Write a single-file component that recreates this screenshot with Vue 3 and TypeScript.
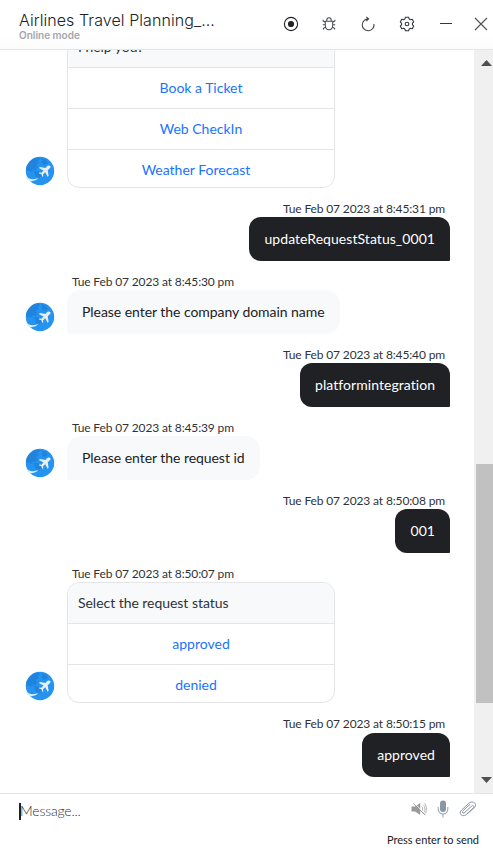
<script setup lang="ts">
interface Message {
  id: number
  from: 'bot' | 'user'
  time?: string
  text: string
  options?: string[]
}

const messages: Message[] = [
  { id: 1, from: 'bot', text: 'I help you?', options: ['Book a Ticket', 'Web CheckIn', 'Weather Forecast'] },
  { id: 2, from: 'user', time: 'Tue Feb 07 2023 at 8:45:31 pm', text: 'updateRequestStatus_0001' },
  { id: 3, from: 'bot', time: 'Tue Feb 07 2023 at 8:45:30 pm', text: 'Please enter the company domain name' },
  { id: 4, from: 'user', time: 'Tue Feb 07 2023 at 8:45:40 pm', text: 'platformintegration' },
  { id: 5, from: 'bot', time: 'Tue Feb 07 2023 at 8:45:39 pm', text: 'Please enter the request id' },
  { id: 6, from: 'user', time: 'Tue Feb 07 2023 at 8:50:08 pm', text: '001' },
  { id: 7, from: 'bot', time: 'Tue Feb 07 2023 at 8:50:07 pm', text: 'Select the request status', options: ['approved', 'denied'] },
  { id: 8, from: 'user', time: 'Tue Feb 07 2023 at 8:50:15 pm', text: 'approved' },
]
</script>

<template>
  <div class="chat">
    <header class="header">
      <div class="heading">
        <div class="title">Airlines Travel Planning_...</div>
        <div class="mode">Online mode</div>
      </div>
      <div class="actions">
        <svg width="16" height="16" viewBox="0 0 16 16" fill="none" stroke="#202124">
          <circle cx="8" cy="8" r="6.6" stroke-width="1.1" />
          <circle cx="8" cy="8" r="3.1" fill="#202124" stroke="none" />
        </svg>
        <svg width="16" height="16" viewBox="0 0 16 16" fill="none" stroke="#4a4c50" stroke-width="1.05">
          <path d="M4.3 5.2h7.4v4.3c0 2.6-1.4 4.2-3.7 4.2s-3.7-1.6-3.7-4.2zM5.8 5V4a2.2 2.2 0 0 1 4.4 0v1M4.3 6.2 2.1 5V3.8M11.7 6.2 13.9 5V3.8M4.2 8.7H1.8M11.8 8.7h2.4M4.6 11.2l-2.2 1.1v1.2M11.4 11.2l2.2 1.1v1.2" />
        </svg>
        <svg width="16" height="16" viewBox="0 0 16 16" fill="none" stroke="#414347" stroke-width="1.1">
          <path d="M8.4 2.9A5.9 5.9 0 1 0 14 8M6.3.9l2.3 1.9-2.2 2.2" />
        </svg>
        <svg width="16" height="16" viewBox="0 0 16 16" fill="none" stroke="#35373a" stroke-width="1.1" stroke-linejoin="round">
          <path d="M6.4 1.2h3.2l.6 1.9 1.1.6 2-.4 1.4 2.6L13.4 7.4v1.2l1.3 1.5-1.4 2.6-2-.4-1.1.6-.6 1.9H6.4l-.6-1.9-1.1-.6-2 .4-1.4-2.6 1.3-1.5V7.4L1.3 5.9l1.4-2.6 2 .4 1.1-.6z" />
          <circle cx="8" cy="8" r="1.8" />
        </svg>
        <svg width="16" height="16" viewBox="0 0 16 16" stroke="#35373a"><path d="M2 7.5h12" /></svg>
        <svg width="16" height="16" viewBox="0 0 16 16" stroke="#505257" stroke-width="1.1"><path d="m2 2 12 12m0-12-12 12" /></svg>
      </div>
    </header>

    <div class="body">
      <main class="messages">
        <div v-for="m in messages" :key="m.id" class="message" :class="m.from">
          <svg v-if="m.from === 'bot'" class="avatar" width="30" height="30" viewBox="0 0 30 30">
            <circle cx="15" cy="15" r="14.2" fill="#2494f0" />
            <path d="M4 6.5 9 2.2l4.7-.9 1.5 2-2.6 1.3 1.2 2.4-3.2 2.4 2.1 1.6-2 3.2-3.4-1.1.2 3.1-4.2-1.6-2.3.3.4-4.2zM16 2l5.5 1.7 1.2 3.8-4.1 1.4-2.1-2.6 1-2.4zM9 15l5 .5 2.5 4.1-2.8 3.7-2.9-2.5z" fill="#1f7fd9" opacity=".8" />
            <path d="M1 20.6c3.2 3 8.4 3.4 13 1-3.4 3.9-9 4.8-12 1.8z" fill="#dfeef6" />
            <path transform="translate(4.2 2.9) scale(.82)" d="M25.9 9c.8.8-.2 2-2 3.7l-1.3 1.2 1.1 6.8-1.3 1.2-2.8-5.6-2.7 2.4.2 2.5-1 .9-1.2-3.3-3.4-1.3 1-1 2.5.3 2.4-2.8-5.5-2.9 1.2-1.2 6.8 1.1 1.2-1.4c1.6-1.7 3.8-1.9 4.8-.6z" fill="#e9eff0" />
          </svg>
          <div class="content">
            <div v-if="m.time" class="time">{{ m.time }}</div>
            <div v-if="m.options" class="card">
              <div class="card-title">{{ m.text }}</div>
              <button v-for="o in m.options" :key="o" class="option">{{ o }}</button>
            </div>
            <div v-else class="bubble">{{ m.text }}</div>
          </div>
        </div>
      </main>
      <div class="scrollbar">
        <svg class="arrow" width="11" height="6" viewBox="0 0 11 6"><path d="M0 6 5.5 0 11 6z" fill="#505050" /></svg>
        <div class="track"><div class="thumb"></div></div>
        <svg class="arrow" width="11" height="6" viewBox="0 0 11 6"><path d="M0 0h11L5.5 6z" fill="#505050" /></svg>
      </div>
    </div>

    <footer class="footer">
      <div class="composer">
        <div class="input"><span class="caret"></span><span class="placeholder">Message...</span></div>
        <div class="tools">
          <svg width="16" height="16" viewBox="0 0 16 16">
            <path d="M.5 5.4h3.6L9.2 2v12l-5.1-3.4H.5z" fill="#999" />
            <path d="M10.6 5.2c1.4 1.7 1.4 3.9 0 5.6M12.2 3.6c2.3 2.6 2.3 6.2 0 8.8M13.6 2.2c2.4 3.2 2.4 8.4 0 11.6" fill="none" stroke="#b5b5b5" />
            <path d="M3.2 2.2 14.8 13.4" stroke="#fff" stroke-width=".8" />
            <path d="M2.4 2.6 14.2 14" stroke="#999" />
          </svg>
          <svg width="12" height="18" viewBox="0 0 12 18">
            <rect x="3" y=".5" width="6" height="11.5" rx="3" fill="#8996a5" />
            <path d="M1.2 7v2.3a4.8 4.8 0 0 0 9.6 0V7M6 14v3.5" fill="none" stroke="#9ca7b3" stroke-width="1.1" />
          </svg>
          <svg width="18" height="16" viewBox="0 0 18 16" fill="none" stroke="#8793a2" stroke-linecap="round">
            <path d="m5 12.1 7.5-6.9c1.6-1.5 3.5.3 2 1.8l-7.1 6.4c-3.6 3.3-8.6-.7-4.9-4.3L10 2.2c3.8-3.4 9 .8 5.3 4.4L9.2 12M4.8 12c-1.8.3-2-1.2-.8-2.3l6.8-6.1" />
          </svg>
        </div>
      </div>
      <div class="hint">Press enter to send</div>
    </footer>
  </div>
</template>

<style>
body {
  background: #fff;
  overflow: hidden;
}
</style>

<style scoped>
.chat {
  width: 493px;
  height: 848px;
  display: flex;
  flex-direction: column;
  box-sizing: border-box;
  font-family: Lato, "Liberation Sans", sans-serif;
  color: #202124;
  background: #fff;
  overflow: hidden;
}
.chat * {
  box-sizing: border-box;
}
.header {
  flex: none;
  height: 50px;
  display: flex;
  justify-content: space-between;
  border-bottom: 1px solid #e4e5e7;
  background: linear-gradient(#fff 60%, #fcfcfc);
  padding-left: 19px;
}
.heading {
  padding-top: 10px;
  font-family: Inter, sans-serif;
  white-space: nowrap;
}
.title {
  font-size: 16px;
  line-height: 20px;
  font-weight: 300;
  letter-spacing: 0.07px;
  color: #202124;
}
.mode {
  font-size: 10px;
  line-height: 10px;
  font-weight: 600;
  color: #a2a6ad;
}
.actions {
  display: flex;
  gap: 22.8px;
  padding: 16px 4.4px 0 0;
}
.actions svg {
  flex: none;
}
.actions svg:last-child {
  margin-left: -4px;
}
.body {
  flex: none;
  height: 743px;
  display: flex;
}
.messages {
  width: 474px;
  height: 743px;
  padding: 0 24px 16px 25px;
  overflow: hidden;
  display: flex;
  flex-direction: column;
  justify-content: flex-end;
  gap: 13px;
}
.message {
  flex: none;
  display: flex;
  align-items: flex-end;
}
.message.user {
  justify-content: flex-end;
}
.avatar {
  flex: none;
  margin: 0 12px 2px 0;
}
.content {
  display: flex;
  flex-direction: column;
  align-items: flex-start;
}
.user .content {
  align-items: flex-end;
}
.time {
  height: 16px;
  line-height: 15px;
  font-size: 12px;
  padding: 0 5px;
  color: #303236;
  white-space: nowrap;
  letter-spacing: -0.14px;
}
.message:last-child .time {
  height: 17px;
}
.bubble {
  height: 44px;
  padding: 0 15px;
  line-height: 44px;
  font-size: 14px;
  white-space: nowrap;
}
.bot .bubble {
  background: #f8f9fb;
  border-radius: 14px 14px 14px 2px;
  letter-spacing: -0.05px;
}
.user .bubble {
  background: #202124;
  color: #fff;
  border-radius: 12px 12px 1px 12px;
  letter-spacing: 0.05px;
}
.card {
  width: 268px;
  border: 1px solid #e4e5e7;
  border-radius: 12px;
  overflow: hidden;
  font-size: 14px;
}
.card-title {
  height: 40px;
  line-height: 39px;
  padding-left: 10px;
  background: #f8f9fb;
  color: #303236;
  letter-spacing: -0.04px;
}
.option {
  display: block;
  width: 100%;
  height: 41px;
  padding: 0 10px 0 10px;
  border: 0;
  border-top: 1px solid #e4e5e7;
  background: none;
  font: inherit;
  line-height: 40px;
  color: #1a73ff;
  text-align: center;
}
.option:last-child {
  height: 39px;
  padding: 0 20px 0 10px;
  margin-bottom: -1px;
}
.scrollbar {
  width: 19px;
  background: #f0f0f0;
  display: flex;
  flex-direction: column;
  align-items: flex-end;
  padding: 10px 0;
}
.arrow {
  flex: none;
  margin-right: 1px;
}
.track {
  flex: 1;
  width: 17px;
  padding-top: 398px;
}
.thumb {
  height: 239px;
  background: #c1c1c1;
}
.footer {
  flex: 1;
  border-top: 1px solid #e4e5e7;
}
.composer {
  display: flex;
  justify-content: space-between;
  align-items: flex-start;
  height: 37px;
  padding: 6px 16px 0 19px;
}
.input {
  display: flex;
  align-items: center;
  padding-top: 3px;
  font-size: 14px;
  font-weight: 300;
}
.caret {
  width: 2px;
  height: 17px;
  background: #202124;
}
.placeholder {
  margin: -2px 0 0 -1px;
  line-height: 17px;
  color: #303236;
  letter-spacing: -0.2px;
}
.tools {
  display: flex;
  align-items: center;
  gap: 10px;
}
.hint {
  padding-right: 14px;
  text-align: right;
  font-size: 11px;
  line-height: 18px;
  letter-spacing: -0.03px;
}
</style>
